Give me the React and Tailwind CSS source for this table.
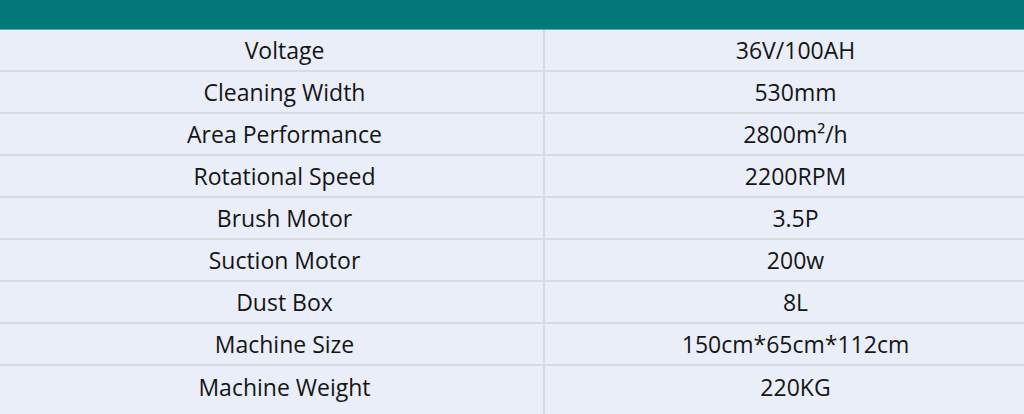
const ROWS = [
  ['Voltage', '36V/100AH'],
  ['Cleaning Width', '530mm'],
  ['Area Performance', '2800m²/h'],
  ['Rotational Speed', '2200RPM'],
  ['Brush Motor', '3.5P'],
  ['Suction Motor', '200w'],
  ['Dust Box', '8L'],
  ['Machine Size', '150cm*65cm*112cm'],
  ['Machine Weight', '220KG'],
]

export default function App() {
  return (
    <div className="w-[1024px] h-[414px] overflow-hidden flex flex-col bg-[#e9eef8] text-[#151515] font-['Open_Sans','Noto_Sans',sans-serif]">
      <div className="h-[30px] shrink-0 bg-[#03797c] border-b border-[#5fa7a8]" />
      {ROWS.map(([k, v], i) => {
        const last = i === ROWS.length - 1
        return (
          <div key={k} className={'flex ' + (last ? 'flex-1' : 'h-[42px] shrink-0 border-b-2 border-[#d9dbe1]')}>
            <div className={'w-[545px] shrink-0 flex items-center justify-center pl-[26px] text-[23px] border-r-2 border-[#d9dbe1] ' + (last ? 'pb-[5px]' : '')}>{k}</div>
            <div className={'flex-1 flex items-center justify-center pl-[22px] text-[23px] ' + (last ? 'pb-[5px]' : '')}>{v}</div>
          </div>
        )
      })}
    </div>
  )
}
